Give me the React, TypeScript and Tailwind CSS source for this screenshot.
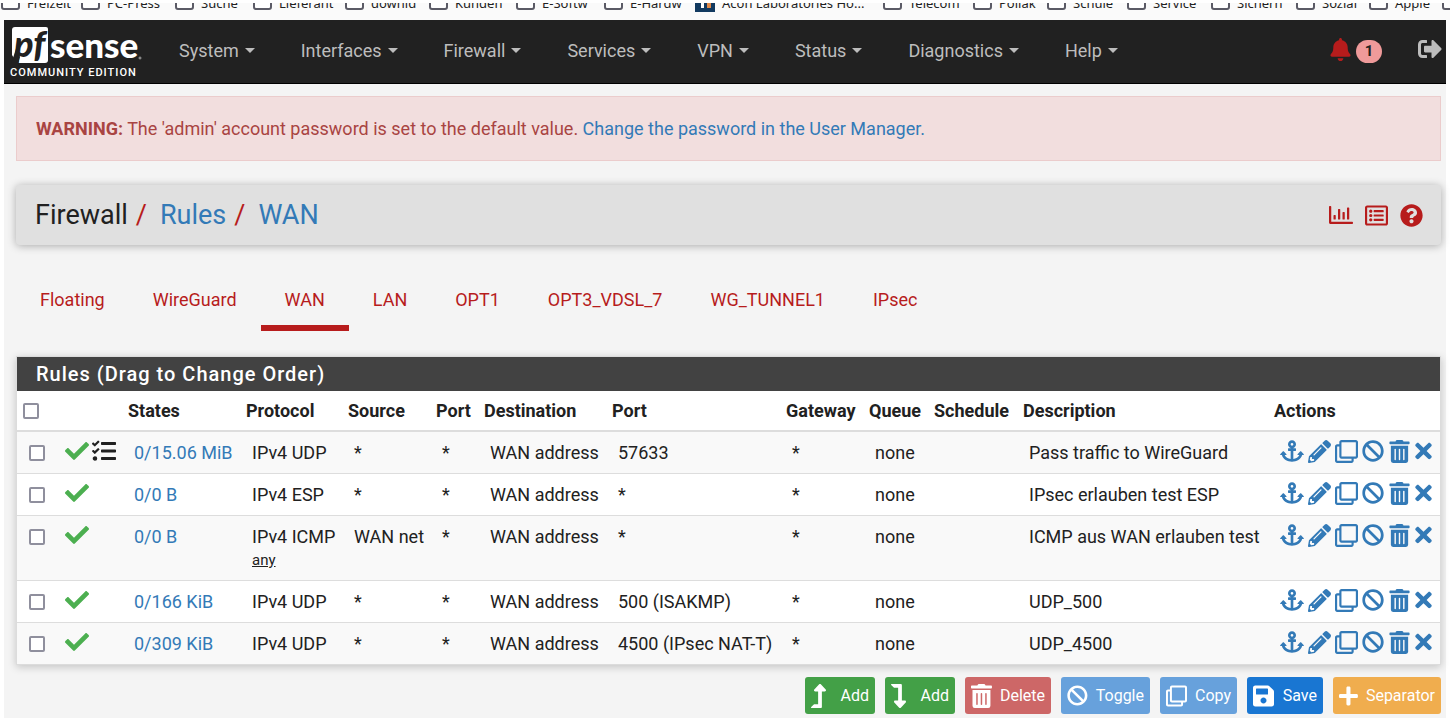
import type { ReactNode } from 'react';
import {
  FaAnchor,
  FaBan,
  FaBell,
  FaCheck,
  FaLevelDownAlt,
  FaLevelUpAlt,
  FaPencilAlt,
  FaPlus,
  FaQuestionCircle,
  FaRegChartBar,
  FaRegClone,
  FaRegListAlt,
  FaSave,
  FaSignOutAlt,
  FaTasks,
  FaTimes,
  FaTrashAlt,
} from 'react-icons/fa';

type Bookmark = { label: string; width: string; site?: boolean };

const bookmarks: Bookmark[] = [
  { label: 'Freizeit', width: 'w-[80px]' },
  { label: 'PC-Press', width: 'w-[94px]' },
  { label: 'Suche', width: 'w-[78px]' },
  { label: 'Lieferant', width: 'w-[92px]' },
  { label: 'downld', width: 'w-[84px]' },
  { label: 'Kunden', width: 'w-[87px]' },
  { label: 'E-Softw', width: 'w-[88px]' },
  { label: 'E-Hardw', width: 'w-[91px]' },
  { label: 'Acon Laboratories Ho...', width: 'w-[188px]', site: true },
  { label: 'Telecom', width: 'w-[90px]' },
  { label: 'Pollak', width: 'w-[74px]' },
  { label: 'Schule', width: 'w-[80px]' },
  { label: 'Service', width: 'w-[84px]' },
  { label: 'Sichern', width: 'w-[85px]' },
  { label: 'Sozial', width: 'w-[73px]' },
  { label: 'Apple', width: 'w-[73px]' },
  { label: '', width: 'w-[73px]' },
];

const menus = ['System', 'Interfaces', 'Firewall', 'Services', 'VPN', 'Status', 'Diagnostics', 'Help'];

const tabs = ['Floating', 'WireGuard', 'WAN', 'LAN', 'OPT1', 'OPT3_VDSL_7', 'WG_TUNNEL1', 'IPsec'];

type Rule = {
  states: string;
  protocol: string;
  subtype?: string;
  source: string;
  destPort: string;
  description: string;
  advanced?: boolean;
};

const rules: Rule[] = [
  { states: '0/15.06 MiB', protocol: 'IPv4 UDP', source: '*', destPort: '57633', description: 'Pass traffic to WireGuard', advanced: true },
  { states: '0/0 B', protocol: 'IPv4 ESP', source: '*', destPort: '*', description: 'IPsec erlauben test ESP' },
  { states: '0/0 B', protocol: 'IPv4 ICMP', subtype: 'any', source: 'WAN net', destPort: '*', description: 'ICMP aus WAN erlauben test' },
  { states: '0/166 KiB', protocol: 'IPv4 UDP', source: '*', destPort: '500 (ISAKMP)', description: 'UDP_500' },
  { states: '0/309 KiB', protocol: 'IPv4 UDP', source: '*', destPort: '4500 (IPsec NAT-T)', description: 'UDP_4500' },
];

const ruleActions = [
  { label: 'Add associated rule', icon: <FaAnchor size={24} /> },
  { label: 'Edit', icon: <FaPencilAlt size={23} /> },
  { label: 'Copy rule', icon: <FaRegClone size={23} /> },
  { label: 'Disable', icon: <FaBan size={22} /> },
  { label: 'Delete rule', icon: <FaTrashAlt size={23} /> },
  { label: 'Kill states', icon: <FaTimes className="h-6 w-[17px]" /> },
];

function BookmarkItem({ label, width, site }: Bookmark) {
  return (
    <a href="#" aria-label={label || 'Bookmark folder'} className={`flex shrink-0 items-end gap-[7px] ${width}`}>
      {site ? (
        <svg width="20" height="20" viewBox="0 0 20 20" className="mb-2 shrink-0" aria-hidden="true">
          <rect width="20" height="20" fill="#123a60" />
          <path d="M6 4h3v12H6z" fill="#fff" />
          <path d="M12 4h4v12h-4z" fill="#e08a4a" />
        </svg>
      ) : (
        <span className="mb-[10px] h-[18px] w-[19px] shrink-0 rounded-[3px] border-2 border-[#5b5b66] bg-white" />
      )}
      <span className="mb-[7px] leading-5 whitespace-nowrap">{label}</span>
    </a>
  );
}

function Logo() {
  return (
    <a href="#" aria-label="pfSense Community Edition" className="flex w-[134px] shrink-0 flex-col items-start gap-px pt-[2px]">
      <svg width="134" height="39" viewBox="0 0 134 39" aria-hidden="true">
        <path d="M5 0h31a2 2 0 0 1 2 2v31a3 3 0 0 1-3 3H7L2 28V3a3 3 0 0 1 3-3z" fill="#fff" />
        <path d="M1 37l5-15 4 8-2 7z" fill="#212121" />
        <text x="4" y="30" fontFamily="Lato, sans-serif" fontSize="36" fontWeight="900" fontStyle="italic" fill="#212121">
          pf
        </text>
        <text x="40" y="31" fontFamily="Lato, sans-serif" fontSize="35" fontWeight="900" fill="#fff">
          sense
        </text>
        <circle cx="130" cy="31" r="1" fill="none" stroke="#aaa" />
      </svg>
      <span className="text-[11px] leading-3 font-medium tracking-[1px] whitespace-nowrap text-white">COMMUNITY EDITION</span>
    </a>
  );
}

function FooterButton({ label, icon, tone }: { label: string; icon: ReactNode; tone: string }) {
  return (
    <button type="button" className={`flex h-[37px] items-center justify-between gap-2 rounded-[3px] px-[6px] text-base text-white ${tone}`}>
      {icon}
      {label}
    </button>
  );
}

export default function App() {
  return (
    <div className="bg-white pb-1 font-['Roboto',sans-serif] text-lg leading-[25px] text-[#212121]">
      <nav aria-label="Bookmarks" className="pt-[3px]">
        <div className="flex h-[17px] items-end overflow-hidden bg-[#fafafa] pl-px font-['Noto_Sans',sans-serif] text-[13px] text-[#222]">
          {bookmarks.map((b) => (
            <BookmarkItem key={b.label} {...b} />
          ))}
        </div>
      </nav>

      <div className="mx-1 bg-[#f4f4f4] pb-1">
        <header className="flex h-16 items-center border-b border-black bg-[#212121] pr-1 pl-[6px] text-[#bdbdbd]">
          <Logo />
          <nav className="ml-[35px] flex gap-[46px] pb-[2px]">
            {menus.map((m) => (
              <button key={m} type="button" className="flex items-center gap-[6px]">
                {m}
                <svg width="10" height="5" viewBox="0 0 10 5" aria-hidden="true">
                  <path d="M0 0h10L5 5z" fill="currentColor" />
                </svg>
              </button>
            ))}
          </nav>
          <a href="#" aria-label="1 notice" className="ml-auto flex items-center gap-1">
            <span className="pb-1"><FaBell size={23} className="text-[#b71c1c]" /></span>
            <span className="flex h-[23px] w-[26px] items-center justify-center rounded-full bg-[#ef9a9a] text-[15px] font-bold text-[#212121]">1</span>
          </a>
          <a href="#" aria-label="Logout" className="ml-9 pb-[6px]">
            <FaSignOutAlt size={24} />
          </a>
        </header>

        <main className="pr-[5px] pl-3">
          <div className="mt-3 flex h-[65px] items-center border border-[#ebcccc] bg-[#f2dede] px-[19px] text-[#a94442]">
            <p>
              <strong>WARNING:</strong> The 'admin' account password is set to the default value.{' '}
              <a href="#" className="text-[#337ab7]">Change the password in the User Manager.</a>
            </p>
          </div>

          <div className="mt-6 flex h-[60px] items-center justify-between rounded bg-[#e0e0e0] pr-[18px] pl-[19px] text-[27px] shadow-[0_1px_8px_rgba(0,0,0,0.3)]">
            <div className="flex items-center gap-2">
              <span>Firewall</span>
              <span className="mr-[5px] text-[#b71c1c]">/</span>
              <a href="#" className="text-[#337ab7]">Rules</a>
              <span className="mr-[5px] text-[#b71c1c]">/</span>
              <a href="#" className="text-[#337ab7]">WAN</a>
            </div>
            <div className="flex items-center gap-3 text-[#b71c1c]">
              <a href="#" aria-label="Status"><FaRegChartBar size={24} /></a>
              <a href="#" aria-label="Logs"><FaRegListAlt size={23} /></a>
              <a href="#" aria-label="Help"><FaQuestionCircle size={23} /></a>
            </div>
          </div>

          <nav className="mt-[23px] flex text-[#b71c1c]">
            {tabs.map((t) => (
              <a
                key={t}
                href="#"
                className={`flex h-[63px] items-center border-b-[6px] px-6 pt-[6px] ${t === 'WAN' ? 'border-[#b71c1c]' : 'border-transparent'}`}
              >
                {t}
              </a>
            ))}
          </nav>

          <section className="mt-[25px] border border-[#dcdcdc] bg-white shadow-[0_2px_8px_rgba(0,0,0,0.2)]">
            <h2 className="h-[34px] bg-[#424242] px-[19px] text-xl leading-[34px] font-medium tracking-[1px] text-white">
              Rules (Drag to Change Order)
            </h2>
            <table className="w-full table-fixed border-collapse text-left whitespace-nowrap">
              <colgroup>
                <col className="w-[36px]" />
                <col className="w-[69px]" />
                <col className="w-[118px]" />
                <col className="w-[102px]" />
                <col className="w-[88px]" />
                <col className="w-[48px]" />
                <col className="w-[128px]" />
                <col className="w-[174px]" />
                <col className="w-[83px]" />
                <col className="w-[65px]" />
                <col className="w-[89px]" />
                <col />
                <col className="w-[172px]" />
              </colgroup>
              <thead>
                <tr className="h-10 border-b-2 border-[#ddd] [&>th]:px-[6px] [&>th]:font-bold">
                  <th>
                    <input type="checkbox" aria-label="Select all rules" className="block size-4 appearance-none rounded-[2px] border-2 border-[#8f8f9d] bg-white" />
                  </th>
                  <th />
                  <th>States</th>
                  <th>Protocol</th>
                  <th>Source</th>
                  <th>Port</th>
                  <th>Destination</th>
                  <th>Port</th>
                  <th>Gateway</th>
                  <th>Queue</th>
                  <th>Schedule</th>
                  <th>Description</th>
                  <th>Actions</th>
                </tr>
              </thead>
              <tbody>
                {rules.map((r) => (
                  <tr
                    key={r.description}
                    className="border-b border-[#ddd] align-top last:border-b-0 odd:bg-[#f9f9f9] [&>td]:px-3 [&>td]:py-2"
                  >
                    <td>
                      <input type="checkbox" aria-label={`Select ${r.description}`} className="mt-[5px] block size-4 appearance-none rounded-[2px] border-2 border-[#8f8f9d] bg-white" />
                    </td>
                    <td>
                      <div className="flex h-[22px] items-center gap-[3px]">
                        <FaCheck size={24} className="shrink-0 text-[#4caf50]" />
                        {r.advanced && <FaTasks size={24} className="shrink-0" />}
                      </div>
                    </td>
                    <td><a href="#" className="text-[#337ab7]">{r.states}</a></td>
                    <td>
                      {r.protocol}
                      {r.subtype && <div className="h-[23px] text-[15px] leading-[23px] underline">{r.subtype}</div>}
                    </td>
                    <td>{r.source}</td>
                    <td>*</td>
                    <td>WAN address</td>
                    <td>{r.destPort}</td>
                    <td>*</td>
                    <td>none</td>
                    <td />
                    <td>{r.description}</td>
                    <td>
                      <div className="flex h-[22px] items-center gap-1 text-[#337ab7]">
                        {ruleActions.map((a) => (
                          <a key={a.label} href="#" aria-label={a.label}>{a.icon}</a>
                        ))}
                      </div>
                    </td>
                  </tr>
                ))}
              </tbody>
            </table>
          </section>

          <div className="mt-3 flex justify-end gap-[10px]">
            <FooterButton tone="w-[70px] bg-[#43a047]" label="Add" icon={<FaLevelUpAlt className="h-6 w-[15px]" />} />
            <FooterButton tone="w-[70px] bg-[#43a047]" label="Add" icon={<FaLevelDownAlt className="h-6 w-[15px]" />} />
            <FooterButton tone="w-[86px] bg-[#cd6767]" label="Delete" icon={<FaTrashAlt className="h-6 w-[21px]" />} />
            <FooterButton tone="w-[89px] bg-[#67a1dc]" label="Toggle" icon={<FaBan size={23} />} />
            <FooterButton tone="w-[77px] bg-[#67a1dc]" label="Copy" icon={<FaRegClone size={24} />} />
            <FooterButton tone="w-[76px] bg-[#1976d2]" label="Save" icon={<FaSave className="h-6 w-[21px]" />} />
            <FooterButton tone="w-[108px] bg-[#f0ad4e]" label="Separator" icon={<FaPlus size={22} />} />
          </div>
        </main>
      </div>
    </div>
  );
}
